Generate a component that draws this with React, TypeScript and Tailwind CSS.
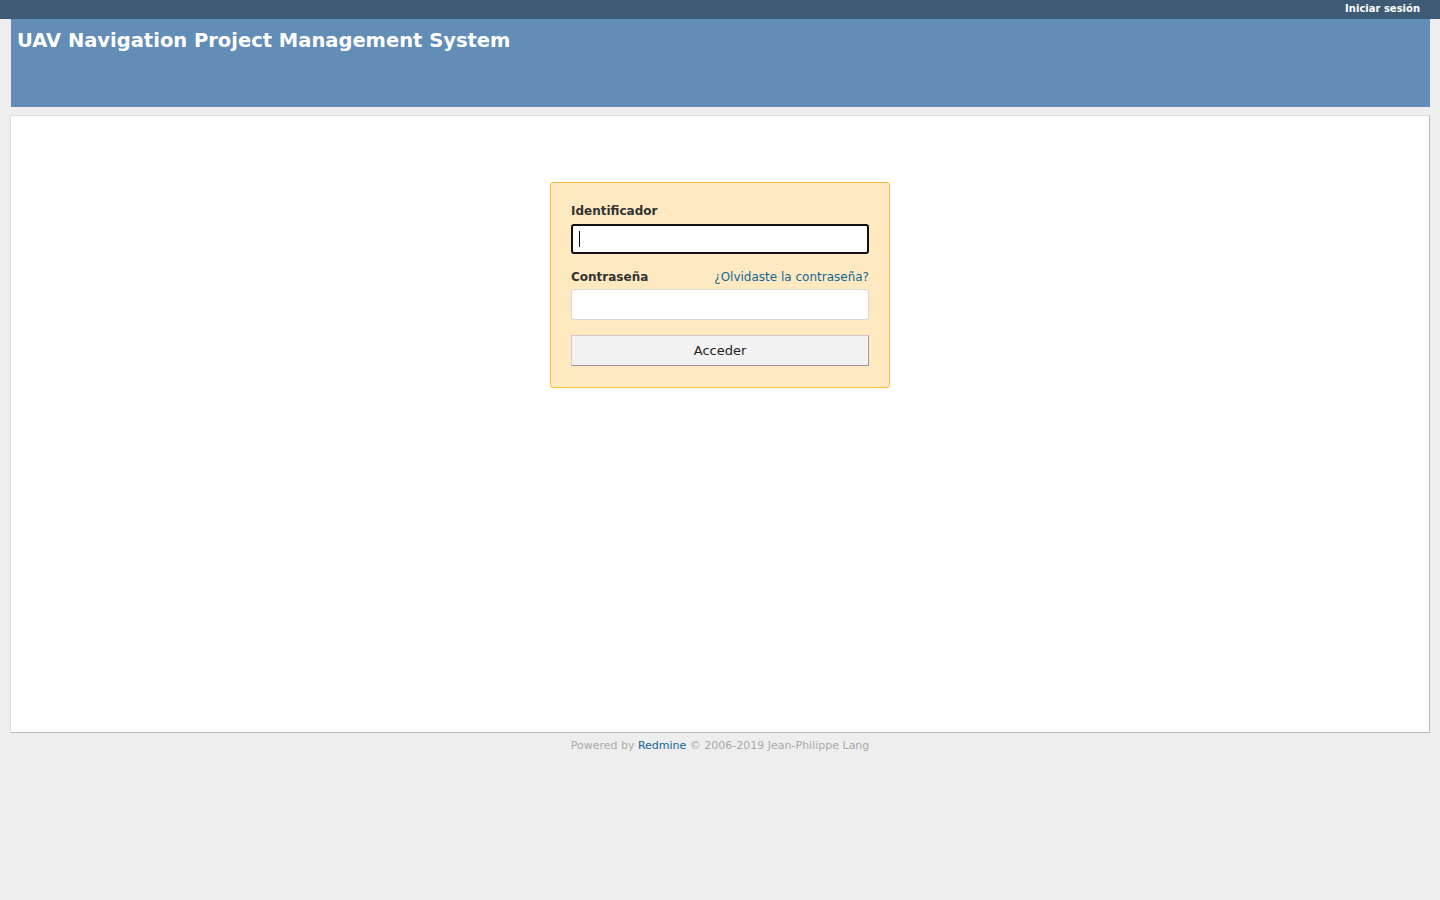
const font = "font-['Verdana','DejaVu_Sans',sans-serif]"

export default function App() {
  return (
    <div className={`min-h-screen bg-[#eeeeee] ${font} text-[#333]`}>
      <div className="flex h-[19px] items-center justify-end bg-[#3e5b76] pr-[20px]">
        <a href="#" className="-mt-[2px] text-[10px] font-bold leading-none text-white">
          Iniciar sesión
        </a>
      </div>

      <div className="pl-[11px] pr-[10px]">
        <div className="h-[88px] bg-[#628db6] px-[6px] pt-[7px]">
          <h1 className="text-[19.5px] font-bold leading-[30px] text-white">
            UAV Navigation Project Management System
          </h1>
        </div>
      </div>

      <div className="px-[10px] pt-[8px]">
        <div className="h-[618px] border border-[#dddddd] border-r-[#bbbbbb] border-b-[#bbbbbb] bg-white pt-[66px]">
          <div className="mx-auto w-[340px] rounded-[3px] border border-[#fdbf3b] bg-[#ffe9c0] px-[20px] pt-[20px] pb-[21px]">
            <label className="block text-[12px] font-bold leading-[16px]">Identificador</label>
            <div className="relative mt-[5px]">
              <input
                type="text"
                className="block h-[30px] w-full rounded-[3px] border-2 border-[#111] bg-white outline-none"
              />
              <span className="absolute left-[8px] top-[7px] h-[16px] w-px bg-black" />
            </div>

            <div className="mt-[15px] flex items-end justify-between">
              <label className="text-[12px] font-bold leading-[16px]">Contraseña</label>
              <a href="#" className="text-[12px] leading-[16px] text-[#169]">
                ¿Olvidaste la contraseña?
              </a>
            </div>
            <input
              type="password"
              className="mt-[4px] block h-[31px] w-full rounded-[3px] border border-[#d7d7d7] bg-white outline-none"
            />

            <button
              type="button"
              className="mt-[15px] block h-[31px] w-full border border-[#cccccc] border-b-[#999] border-r-[#999] bg-[#f2f2f2] text-[13px] text-[#222]"
            >
              Acceder
            </button>
          </div>
        </div>
      </div>

      <div className="pt-[6px] text-center text-[11px] leading-[14px] text-[#aaaaaa]">
        Powered by <a href="#" className="text-[#169]">Redmine</a> © 2006-2019 Jean-Philippe Lang
      </div>
    </div>
  )
}
